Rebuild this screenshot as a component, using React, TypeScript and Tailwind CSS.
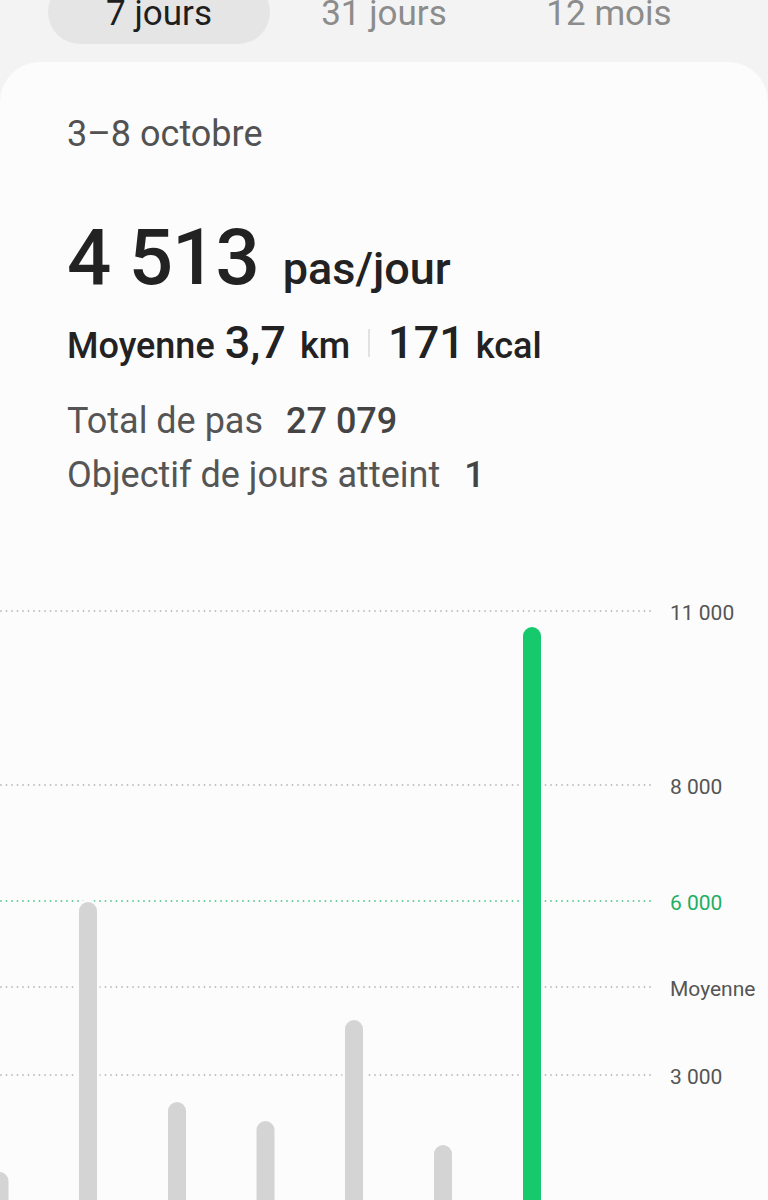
import React from 'react'

const font = { fontFamily: 'Roboto, "Noto Sans", sans-serif' }

// chart geometry, y is relative to the top of the svg
const gridLines = [
  { y: 51, label: '11 000', green: false },
  { y: 225, label: '8 000', green: false },
  { y: 341, label: '6 000', green: true },
  { y: 427, label: 'Moyenne', green: false },
  { y: 515, label: '3 000', green: false },
]

const bars = [
  { x: -0.5, top: 612 },
  { x: 88, top: 342 },
  { x: 177, top: 542 },
  { x: 265.5, top: 561 },
  { x: 354, top: 460 },
  { x: 443, top: 585 },
  { x: 532, top: 67, active: true },
]

function Tabs() {
  const tabs = ['7 jours', '31 jours', '12 mois']
  return (
    <div className="flex h-[44px] items-end pl-[48px]">
      {tabs.map((t, i) => (
        <div
          key={t}
          className={
            'mr-[3px] flex h-[64px] w-[222px] items-center justify-center rounded-[32px] text-[35px] leading-none ' +
            (i === 0 ? 'bg-[#e5e5e5] text-[#1e1e1e]' : 'text-[#8c8c8c]')
          }
        >
          <span className="mt-[2px]">{t}</span>
        </div>
      ))}
    </div>
  )
}

function StepsChart() {
  return (
    <svg width="768" height="640" viewBox="0 0 768 640" className="block">
      {gridLines.map((l) => (
        <line
          key={l.label}
          x1="1"
          x2="652"
          y1={l.y}
          y2={l.y}
          stroke={l.green ? '#5cc994' : '#bdbdbd'}
          strokeWidth="1.8"
          strokeDasharray="0 5.5"
          strokeLinecap="round"
        />
      ))}
      {bars.map((b, i) => (
        <rect
          key={i}
          x={b.x - 9}
          y={b.top}
          width={18}
          height={700 - b.top}
          rx={9}
          fill={b.active ? '#15c96c' : '#d4d4d4'}
          stroke="#fcfcfc"
          strokeWidth="5"
          paintOrder="stroke"
        />
      ))}
      {gridLines.map((l) => (
        <text
          key={'t' + l.label}
          x="670"
          y={l.y + 1.5}
          dominantBaseline="central"
          fontSize="21"
          fill={l.green ? '#1fae63' : '#555555'}
          style={font}
        >
          {l.label}
        </text>
      ))}
    </svg>
  )
}

export default function App() {
  return (
    <div className="h-[1200px] overflow-hidden bg-[#f3f3f3]" style={font}>
      <Tabs />

      <div className="mt-[18px] h-[1138px] rounded-t-[40px] bg-[#fcfcfc]">
        <div className="pl-[67px] pt-[52px]">
          <div className="text-[36px] leading-[40px] text-[#525252]">3–8 octobre</div>

          <div className="mt-[64px] flex items-baseline text-[#222222]">
            <span className="text-[78px] font-medium leading-[80px] tracking-[-1px]">4 513</span>
            <span className="ml-[24px] text-[45px] font-medium leading-none">pas/jour</span>
          </div>

          <div className="mt-[20px] flex items-baseline text-[#222222]">
            <span className="text-[36px] font-medium leading-none">Moyenne</span>
            <span className="ml-[10px] text-[45px] font-medium leading-[50px]">3,7</span>
            <span className="ml-[14px] text-[36px] font-medium leading-none">km</span>
            <span className="mx-[18px] inline-block h-[28px] w-[2px] self-center bg-[#e2e2e2]" />
            <span className="text-[45px] font-medium leading-[50px]">171</span>
            <span className="ml-[11px] text-[36px] font-medium leading-none">kcal</span>
          </div>

          <div className="mt-[26px] flex items-baseline text-[36px] leading-[54px] text-[#555555]">
            <span>Total de pas</span>
            <span className="ml-[23px] font-medium text-[#444444]">27 079</span>
          </div>
          <div className="flex items-baseline text-[36px] leading-[54px] text-[#555555]">
            <span>Objectif de jours atteint</span>
            <span className="ml-[24px] font-medium text-[#444444]">1</span>
          </div>
        </div>

        <div className="mt-[58px]">
          <StepsChart />
        </div>
      </div>
    </div>
  )
}
